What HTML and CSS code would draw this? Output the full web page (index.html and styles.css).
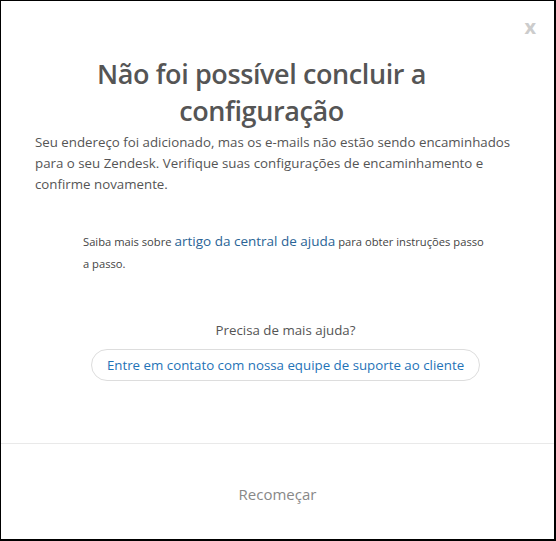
FILE: index.html
```html
<!DOCTYPE html>
<html lang="pt">
<head>
<meta charset="utf-8">
<link rel="stylesheet" href="styles.css">
</head>
<body>
<div class="modal">
  <div class="modal-body">
    <button class="close">x</button>
    <h1 class="title">Não foi possível concluir a configuração</h1>
    <p class="lead">Seu endereço foi adicionado, mas os e-mails não estão sendo encaminhados para o seu Zendesk. Verifique suas configurações de encaminhamento e confirme novamente.</p>
    <p class="help">Saiba mais sobre <a class="link" href="#">artigo da central de ajuda</a> para obter instruções passo a passo.</p>
    <div class="support">
      <p class="more">Precisa de mais ajuda?</p>
      <a class="contact" href="#">Entre em contato com nossa equipe de suporte ao cliente</a>
    </div>
  </div>
  <div class="modal-footer">
    <a class="restart" href="#">Recomeçar</a>
  </div>
</div>
</body>
</html>
```
FILE: styles.css
```css
html, body { margin: 0; padding: 0; }
body {
  width: 556px;
  height: 541px;
  font-family: "Open Sans", "Noto Sans", sans-serif;
  color: #555;
  background: #fff;
}
.modal {
  box-sizing: border-box;
  width: 556px;
  height: 541px;
  border: 1px solid #000;
  border-right-width: 2px;
  border-bottom-width: 2px;
  display: flex;
  flex-direction: column;
}
.modal-body {
  position: relative;
  height: 443px;
  border-bottom: 1px solid #e9e9e9;
  padding: 54px 34px 0 34px;
  box-sizing: border-box;
}
.close {
  position: absolute;
  top: 12px;
  right: 18px;
  border: 0;
  background: none;
  font-family: "Open Sans", sans-serif;
  font-weight: 700;
  font-size: 20px;
  color: #ccc;
  padding: 0;
}
.title {
  margin: 0;
  text-align: center;
  font-weight: 600;
  font-size: 27px;
  letter-spacing: -0.4px;
  line-height: 37px;
  color: #555;
  padding: 0 62px 0 30px;
}
.lead {
  margin: 3px 0 0 0;
  font-size: 13.3px;
  line-height: 21px;
  color: #555;
}
.help {
  margin: 36px 0 0 48px;
  width: 405px;
  font-size: 11.2px;
  line-height: 22px;
  color: #444;
}
.link {
  color: #2a6496;
  text-decoration: none;
  font-size: 13.5px;
  line-height: 1;
}
.support {
  margin-top: 45px;
  padding-left: 16px;
  display: flex;
  flex-direction: column;
  align-items: center;
}
.more {
  margin: 0;
  font-size: 13.3px;
  line-height: 20px;
  color: #555;
}
.contact {
  margin-top: 9px;
  box-sizing: border-box;
  width: 389px;
  height: 32px;
  border: 1px solid #ddd;
  border-radius: 16px;
  display: flex;
  align-items: center;
  justify-content: center;
  font-size: 13.3px;
  color: #1f73b7;
  text-decoration: none;
}
.modal-footer {
  flex: 1;
  display: flex;
  align-items: center;
  justify-content: center;
  padding-top: 4px;
}
.restart {
  font-size: 15px;
  color: #888;
  text-decoration: none;
}
```
